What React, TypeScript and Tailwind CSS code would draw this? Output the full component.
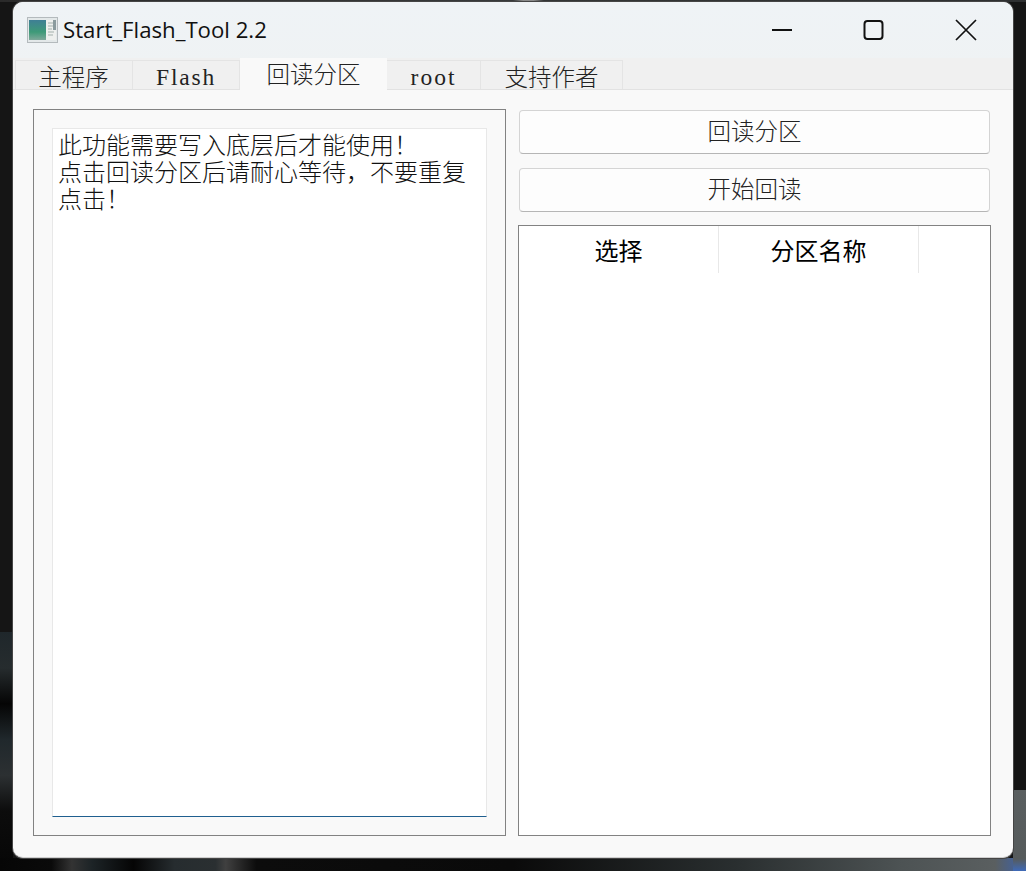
const cjk = "font-['Noto_Sans_CJK_SC',sans-serif] font-light";

function Tab({ label, className }: { label: string; className: string }) {
  return (
    <div className={`flex items-center justify-center text-[23.5px] text-[#222] ${className}`}>
      {label}
    </div>
  );
}

function AppIcon() {
  return (
    <svg width="31" height="26" viewBox="0 0 31 26" className="mr-[5px]">
      <defs>
        <linearGradient id="g" x1="0" y1="0" x2="0" y2="1">
          <stop offset="0" stopColor="#3f7f95" />
          <stop offset="0.6" stopColor="#3e9a78" />
          <stop offset="1" stopColor="#7fa89a" />
        </linearGradient>
      </defs>
      <rect x="0.5" y="0.5" width="30" height="25" fill="#e3e8e9" stroke="#b4babd" />
      <rect x="2" y="3" width="17" height="20" fill="url(#g)" />
      <rect x="19" y="3" width="10" height="20" fill="#eef0ee" />
      <path d="M21 6h5M21 9h6M21 12h4M21 15h6M21 18h5" stroke="#a3b0ac" strokeWidth="1" />
      <rect x="26" y="3" width="3" height="10" fill="#8b9b9e" />
    </svg>
  );
}

export default function App() {
  return (
    <div className="relative h-[871px] w-[1026px] overflow-hidden bg-[#151515] pl-[13px] pt-[2px]">
      <div className="absolute left-0 top-0 h-[2px] w-full bg-[linear-gradient(to_right,#2a2a2a_0%,#383a3b_50%,#8a8a8a_51%,#8a8a8a_52%,#333536_53%,#2e3031_100%)]" />
      <div className="absolute left-0 top-[632px] h-[239px] w-[13px] bg-[linear-gradient(to_bottom,#1f272b_0%,#262c2e_15%,#050505_30%,#20282c_45%,#2c3032_60%,#0c0c0c_75%,#060606_100%)]" />
      <div className="absolute bottom-0 left-0 h-[13px] w-full bg-[linear-gradient(to_right,#060606_0%,#0a0a0a_5%,#333333_7%,#1c2326_9%,#050505_13%,#262c2f_17%,#2a2f31_21%,#404040_22%,#0c0c0c_25%,#0a0a0a_50%,#2a2f30_72%,#4d5354_88%,#5a5f60_97%,#3a62b0_100%)]" />
      <div className="absolute right-0 top-[790px] h-[81px] w-[13px] bg-[linear-gradient(to_bottom,#5a5f60_0%,#565b5c_85%,#3f6ab8_100%)]" />
      <div className="relative flex h-[856px] w-[1000px] flex-col overflow-hidden rounded-[10px] border-b border-[#cfcfcf] bg-[#f9f9f9] shadow-[0_0_0_1px_#454545]">
        <div className="bg-gradient-to-b from-[#eff3f6] to-[#eff2f3]">
          <div className="flex h-[56px] items-center pl-[14px]">
            <AppIcon />
            <span className="font-['Open_Sans','Noto_Sans',sans-serif] text-[22.2px] text-[#111]">Start_Flash_Tool 2.2</span>
            <div className="ml-auto flex h-full items-center">
              <svg width="22" height="22" viewBox="0 0 22 22" className="mr-[70px]"><path d="M1 11h20" stroke="#111" strokeWidth="2" /></svg>
              <svg width="22" height="22" viewBox="0 0 22 22" className="mr-[70px]"><rect x="1.5" y="2" width="18" height="18" rx="3" fill="none" stroke="#111" strokeWidth="2" /></svg>
              <svg width="22" height="22" viewBox="0 0 22 22" className="mr-[36px]"><path d="M1 1l20 20M21 1L1 21" stroke="#111" strokeWidth="1.7" /></svg>
            </div>
          </div>
          <div className="flex h-[32px] items-stretch border-b border-[#e2e2e2] bg-[#f0f0f0] pl-[2px]">
            <Tab label="主程序" className={`mt-[2px] w-[118px] border-l border-r border-t border-[#e4e4e4] pr-[1px] pt-[3px] ${cjk}`} />
            <Tab label="Flash" className="mt-[2px] w-[107px] border-r border-t border-[#e4e4e4] pt-[6px] font-['Liberation_Serif',serif] tracking-[1.8px]" />
            <Tab label="回读分区" className={`-mb-px w-[147px] bg-[#f9f9f9] ${cjk}`} />
            <Tab label="root" className="mt-[2px] w-[94px] border-r border-t border-[#e4e4e4] pt-[6px] font-['Liberation_Serif',serif] tracking-[2px]" />
            <Tab label="支持作者" className={`mt-[2px] w-[142px] border-r border-t border-[#e4e4e4] pt-[3px] ${cjk}`} />
          </div>
        </div>
        <div className="flex flex-1 gap-[12px] pb-[21px] pl-[20px] pr-[22px] pt-[19px]">
          <div className="h-[727px] w-[473px] border border-[#828282] p-[18px]">
            <div className="h-[689px] w-[435px] border border-[#e8e8e8] border-b-[#1f5f8f] bg-white pl-[5px] pr-[4px] pt-[4px] font-['Liberation_Serif','Noto_Sans_CJK_SC',serif] text-[24px] font-light leading-[27px] text-[#111]">
              <div>{"此功能需要写入底层后才能使用\uFF01"}</div>
              <div>{"点击回读分区后请耐心等待\uFF0C不要重复"}</div>
              <div>{"点击\uFF01"}</div>
            </div>
          </div>
          <div className="flex w-[473px] flex-col">
            <button className={`mx-[1px] mt-px h-[44px] rounded-[4px] border border-[#d4d4d4] border-b-[#b5b5b5] bg-[#fdfdfd] pb-[3px] text-[23.5px] text-[#222] ${cjk}`}>回读分区</button>
            <button className={`mx-[1px] mt-[14px] h-[44px] rounded-[4px] border border-[#d4d4d4] border-b-[#b5b5b5] bg-[#fdfdfd] pb-[3px] text-[23.5px] text-[#222] ${cjk}`}>开始回读</button>
            <div className="mt-[13px] flex-1 border border-[#828282] bg-white">
              <div className="flex h-[47px]">
                <div className="flex w-[200px] items-center justify-center border-r border-[#e8e8e8] font-['Noto_Sans_CJK_SC',sans-serif] text-[24px] text-black">选择</div>
                <div className="flex w-[200px] items-center justify-center border-r border-[#e8e8e8] font-['Noto_Sans_CJK_SC',sans-serif] text-[24px] text-black">分区名称</div>
              </div>
            </div>
          </div>
        </div>
      </div>
    </div>
  );
}
